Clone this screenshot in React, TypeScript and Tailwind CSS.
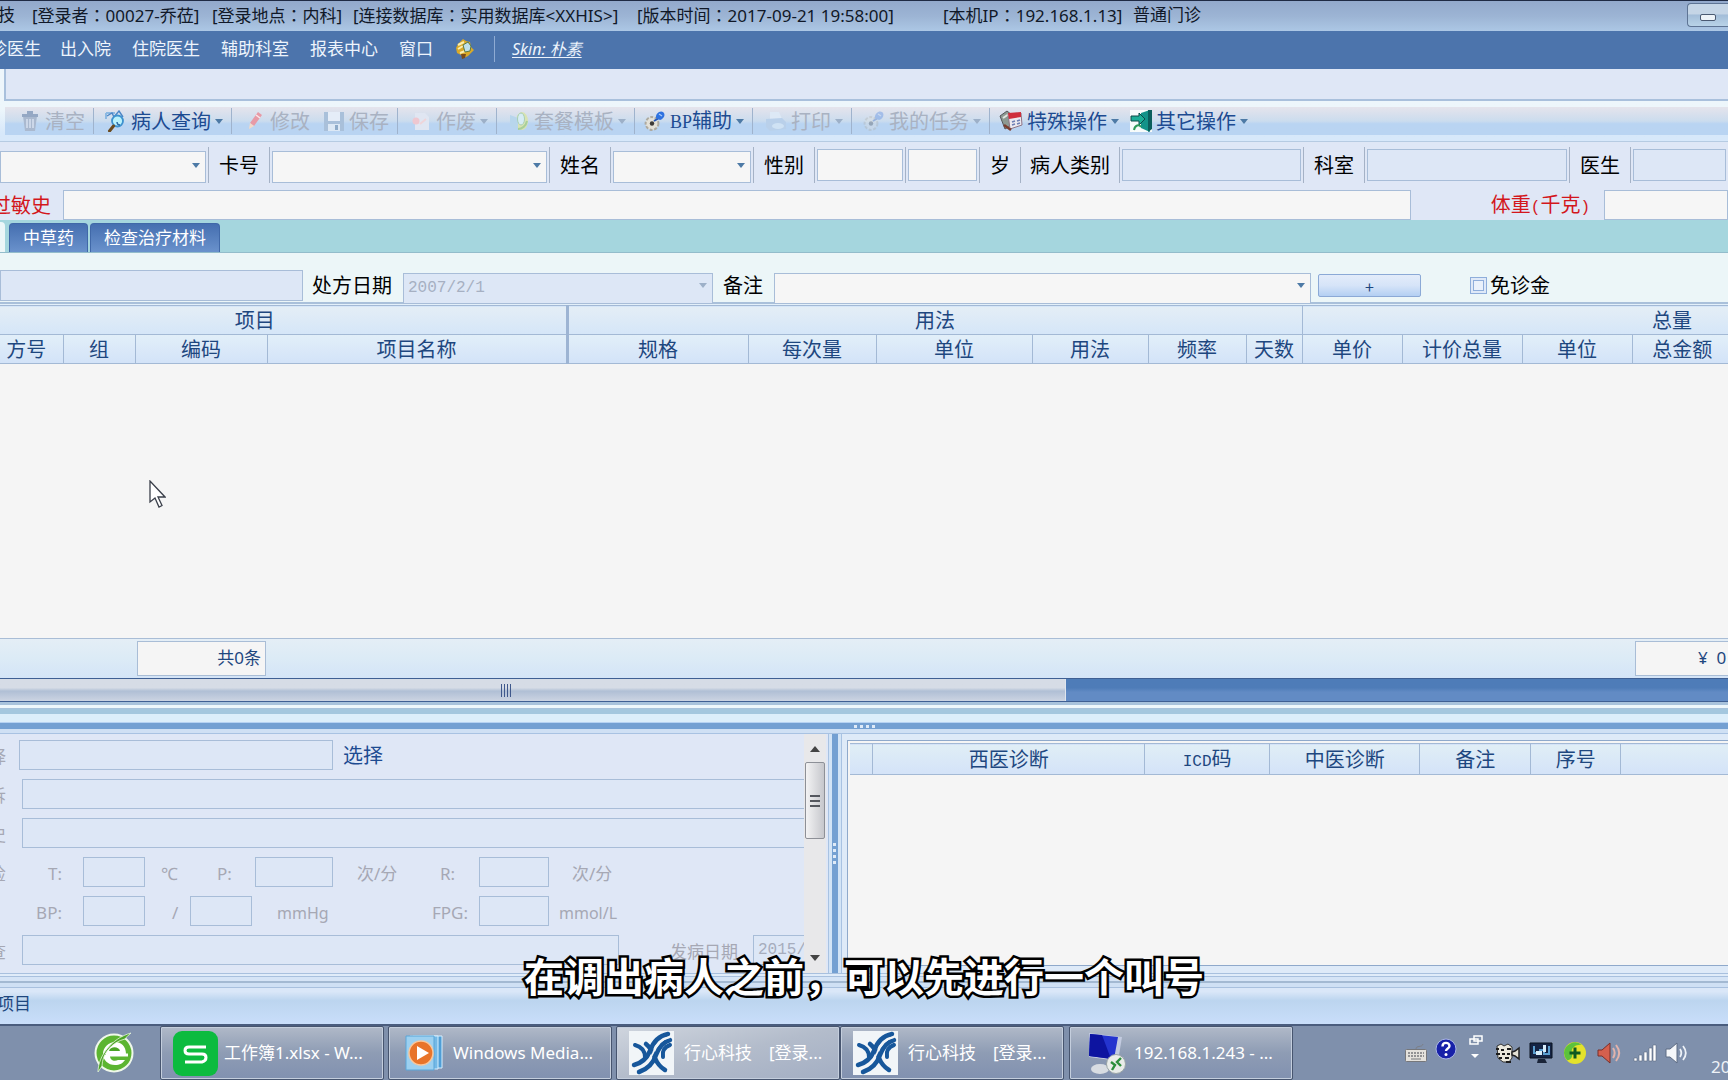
import type { ReactNode } from "react";

const UI = "font-['Noto_Sans','Noto_Sans_CJK_SC',sans-serif]";
const FORM = "font-['Noto_Sans_CJK_SC',sans-serif]";
const MONO = "font-['Liberation_Mono',monospace]";

function Caret({ muted = false }: { muted?: boolean }) {
  return (
    <svg viewBox="0 0 8 5" className={`h-[5px] w-2 shrink-0 ${muted ? "text-[#9db0c8]" : "text-[#4d7aa6]"}`} aria-hidden="true">
      <path d="M0 0h8L4 5z" fill="currentColor" />
    </svg>
  );
}

function Box({ id, label, off = false, className = "", value }: { id?: string; label?: string; off?: boolean; className?: string; value?: string }) {
  return (
    <input
      id={id}
      aria-label={label}
      disabled={off}
      defaultValue={value}
      className={`min-w-0 rounded-none border border-[#a8bdd8] pl-1 outline-none ${off ? "bg-[#dde7f6] text-[#a6adbd]" : "bg-[#f6f6f6] text-black"} ${className}`}
    />
  );
}

function Combo({ id, label, off = false, className = "", value = "" }: { id?: string; label?: string; off?: boolean; className?: string; value?: string }) {
  return (
    <div className={`relative ${className}`}>
      <select
        id={id}
        aria-label={label}
        disabled={off}
        className={`size-full appearance-none rounded-none border border-[#a8bdd8] px-1 text-base opacity-100 outline-none ${MONO} ${off ? "bg-[#dde7f6] text-[#a6b0c2]" : "bg-[#f6f6f6] text-black"}`}
      >
        <option>{value}</option>
      </select>
      <span className="pointer-events-none absolute inset-y-0 right-1.5 flex items-center">
        <Caret muted={off} />
      </span>
    </div>
  );
}

/* ---------- toolbar icons ---------- */

const TrashIcon = () => (
  <svg viewBox="0 0 22 22" className="size-[22px]">
    <path d="M4 6h14l-2 15H6z" fill="#aab9cf" />
    <path d="M3 4h16v3H3zM8 1h6v3H8z" fill="#95a8c4" />
    <path d="M8 9v9M11 9v9M14 9v9" stroke="#dbe4f2" strokeWidth="1.4" />
  </svg>
);
const FindIcon = () => (
  <svg viewBox="0 0 22 22" className="size-[22px]">
    <path d="M1 3h9M1 3v6" stroke="#8db9e2" strokeWidth="2" fill="none" />
    <path d="M2 6l5-3 2 4 5-6 4 6" stroke="#4b86c6" strokeWidth="1.4" fill="none" />
    <circle cx="12.5" cy="11" r="5.500" fill="#b9f1fb" stroke="#3d92cf" strokeWidth="1.800" />
    <path d="M12 12a3 3 0 003 3" stroke="#2c6aa8" strokeWidth="1.400" fill="none" />
    <path d="M8.500 16l-4 5" stroke="#6b4a1e" strokeWidth="3" strokeLinecap="round" />
  </svg>
);
const PenIcon = () => (
  <svg viewBox="0 0 22 22" className="size-[22px]">
    <path d="M14 2l4 3-8 11-4-3z" fill="#e79aa6" />
    <path d="M6 13l4 3-5 3z" fill="#f3d9c8" />
    <path d="M12 5l4 3" stroke="#fbe6ea" strokeWidth="1.5" />
  </svg>
);
const SaveIcon = () => (
  <svg viewBox="0 0 22 22" className="size-[22px]">
    <path d="M1 2h20v19H1z" fill="#a9c0da" />
    <path d="M5 2h12v9H5z" fill="#e5edf8" />
    <path d="M5 14h12v7H5z" fill="#dce8f5" />
    <path d="M12 15h3v5h-3z" fill="#8eabc9" />
  </svg>
);
const VoidIcon = () => (
  <svg viewBox="0 0 22 22" className="size-[22px]">
    <path d="M5 3h10l4 4v13H5z" fill="#e0e6f2" />
    <circle cx="6" cy="11" r="3.500" fill="#eec7d0" />
    <path d="M10 14l6-5" stroke="#eed5da" strokeWidth="2" />
  </svg>
);
const TemplateIcon = () => (
  <svg viewBox="0 0 22 22" className="size-[22px]">
    <ellipse cx="14" cy="11" rx="6" ry="9" fill="#d9e3b2" />
    <path d="M2 5l8 3v12l-8-4z" fill="#b8d6ec" />
    <ellipse cx="13" cy="9" rx="3.500" ry="6" fill="#d7ecf4" stroke="#a7cfb4" />
    <path d="M10 19c4 0 8-3 9-8" stroke="#a7cf9a" strokeWidth="2" fill="none" />
  </svg>
);
const GearIcon = ({ faded = false }: { faded?: boolean }) => (
  <svg viewBox="0 0 22 22" className={`size-[22px] ${faded ? "opacity-30" : ""}`}>
    <circle cx="8" cy="13.500" r="6.400" fill="#e4e1d8" stroke="#aeaaa0" strokeWidth="2" strokeDasharray="3 1.600" />
    <circle cx="8" cy="13.500" r="2.200" fill="#3d3a36" />
    <path d="M10 11l5-3" stroke="#2456b8" strokeWidth="2" />
    <path d="M12 8c-1-4 4-8 7-6s1 7-3 8z" fill="#2f72e0" />
    <path d="M15 4l3 2" stroke="#a9cdfb" strokeWidth="1.400" />
  </svg>
);
const PrintIcon = () => (
  <svg viewBox="0 0 22 22" className="size-[22px]">
    <path d="M5 2h9l3 7H5z" fill="#dde9f6" />
    <path d="M1 9l16-1 4 4v7l-16 2-4-4z" fill="#b9d0ea" />
    <ellipse cx="13" cy="16" rx="6" ry="3" fill="#cfe2f4" />
  </svg>
);
const SpecialIcon = () => (
  <svg viewBox="0 0 24 22" className="h-[22px] w-6">
    <path d="M1 6l7-5 5 4-2 11-5 3z" fill="#8d9a92" stroke="#55565a" />
    <path d="M4 8l6-4" stroke="#e2e8e2" strokeWidth="2" />
    <path d="M9 4l13-1 1 12-12 4z" fill="#eceaf0" stroke="#8e7484" />
    <path d="M9 3l13-1v5L10 9z" fill="#cf2f3c" />
    <path d="M13 12l3-1M18 11l3-1M13 15l3-1M18 14l3-1" stroke="#6d7fb4" strokeWidth="1.6" />
    <path d="M5 15l7 5" stroke="#7c3e2e" strokeWidth="2.5" />
  </svg>
);
const OtherIcon = () => (
  <svg viewBox="0 0 22 22" className="size-[22px]">
    <path d="M0 0h22v22H0z" fill="#f7fbfb" />
    <path d="M11 3l9-3v22l-9-4z" fill="#129389" />
    <path d="M18 0h4v19l-4 3z" fill="#0a5e5c" />
    <path d="M1 6h8V3l6 6-6 6v-4H1z" fill="#1cae97" stroke="#0c4a48" />
    <path d="M4 20c1-5 5-6 7-3" stroke="#2e9a5a" strokeWidth="2" fill="none" />
  </svg>
);

type Tool = { w: string; text: string; latin?: string; icon: ReactNode; off?: boolean; drop?: boolean; sep?: boolean };

const tools: Tool[] = [
  { w: "w-[89px]", text: "清空", icon: <TrashIcon />, off: true, sep: true },
  { w: "w-[138px]", text: "病人查询", icon: <FindIcon />, drop: true, sep: true },
  { w: "w-[86px]", text: "修改", icon: <PenIcon />, off: true },
  { w: "w-[80px]", text: "保存", icon: <SaveIcon />, off: true, sep: true },
  { w: "w-[99px]", text: "作废", icon: <VoidIcon />, off: true, drop: true, sep: true },
  { w: "w-[138px]", text: "套餐模板", icon: <TemplateIcon />, off: true, drop: true, sep: true },
  { w: "w-[118px]", text: "辅助", latin: "BP", icon: <GearIcon />, drop: true, sep: true },
  { w: "w-[99px]", text: "打印", icon: <PrintIcon />, off: true, drop: true, sep: true },
  { w: "w-[138px]", text: "我的任务", icon: <GearIcon faded />, off: true, drop: true, sep: true },
  { w: "w-[137px]", text: "特殊操作", icon: <SpecialIcon />, drop: true },
  { w: "w-[129px]", text: "其它操作", icon: <OtherIcon />, drop: true },
];

function Toolbar() {
  return (
    <div role="toolbar" className={`h-[41px] shrink-0 border-b border-[#b6cbe2] bg-linear-to-b from-[#edf6fb] from-20% to-[#d7e8fa] to-80% pl-[5px] pt-1.5 ${FORM}`}>
      <div className="flex h-7 items-center bg-linear-to-b from-[#e5e4ec] from-0% via-[#cbdcee] via-50% to-[#b9d4f2] to-60%">
        {tools.map((t) => (
          <button
            key={t.text}
            type="button"
            disabled={t.off}
            className={`flex h-[26px] shrink-0 items-center justify-end gap-1 whitespace-nowrap pr-2 text-xl ${t.w} ${t.sep ? "border-r border-[#9fb3cd]" : ""} ${t.off ? "text-[#a9b2c2]" : "text-[#1d4b91]"}`}
          >
            {t.icon}
            <span>
              {t.latin && <span className="font-['Liberation_Serif',serif] text-lg">{t.latin}</span>}
              {t.text}
            </span>
            {t.drop && <Caret muted={t.off} />}
          </button>
        ))}
      </div>
    </div>
  );
}

/* ---------- patient form ---------- */

type Cell = { kind: "label" | "input" | "combo" | "off"; text?: string; id?: string };
const cells: Cell[] = [
  { kind: "combo", text: "门诊号" },
  { kind: "label", text: "卡号", id: "card" },
  { kind: "combo", id: "card" },
  { kind: "label", text: "姓名", id: "name" },
  { kind: "combo", id: "name" },
  { kind: "label", text: "性别", id: "sex" },
  { kind: "input", id: "sex" },
  { kind: "input", id: "age" },
  { kind: "label", text: "岁", id: "age" },
  { kind: "label", text: "病人类别", id: "kind" },
  { kind: "off", id: "kind" },
  { kind: "label", text: "科室", id: "dept" },
  { kind: "off", id: "dept" },
  { kind: "label", text: "医生", id: "doctor" },
  { kind: "off", id: "doctor" },
];

function PatientForm() {
  return (
    <div className={`shrink-0 bg-[#dfe7f6] text-xl ${FORM}`}>
      <div className="grid h-12 grid-cols-[209fr_61px_280fr_61px_143fr_61px_91fr_74fr_41px_99px_184fr_61px_205fr_61px_97fr] items-start pt-[5px]">
        {cells.map((c, i) => (
          <div key={i} className="flex h-9 min-w-0 items-center justify-center border-r border-[#a5b2c6] last:border-r-0">
            {c.kind === "label" && <label htmlFor={c.id} className="whitespace-nowrap text-black">{c.text}</label>}
            {c.kind === "combo" && <Combo id={c.id} label={c.text} className={`mr-0.5 h-8 w-full ${i ? "ml-0.5" : ""}`} />}
            {(c.kind === "input" || c.kind === "off") && <Box id={c.id} off={c.kind === "off"} className="mx-0.5 h-8 w-full" />}
          </div>
        ))}
      </div>
      <div className="flex h-[30px] items-center text-[#d3161c]">
        <label htmlFor="allergy" className="flex w-[63px] shrink-0 justify-end overflow-hidden whitespace-nowrap pr-3 leading-7">过敏史</label>
        <Box id="allergy" className="h-[30px] flex-1" />
        <label htmlFor="weight" className="w-[193px] shrink-0 whitespace-nowrap pr-3.5 text-right leading-7">
          体重<span className={`text-base ${MONO}`}>(</span>千克<span className={`text-base ${MONO}`}>)</span>
        </label>
        <Box id="weight" className="h-[30px] w-[124px]" />
      </div>
    </div>
  );
}

/* ---------- prescription grid ---------- */

const columns: [string, string][] = [
  ["方号", "w-[63px]"],
  ["组", "w-[72px]"],
  ["编码", "w-[132px]"],
  ["项目名称", "w-[300px]"],
  ["规格", "w-[181px]"],
  ["每次量", "w-[128px]"],
  ["单位", "w-[156px]"],
  ["用法", "w-[116px]"],
  ["频率", "w-[98px]"],
  ["天数", "w-[56px]"],
  ["单价", "w-[100px]"],
  ["计价总量", "w-[120px]"],
  ["单位", "w-[110px]"],
  ["总金额", "w-[96px]"],
];

function ItemsTable() {
  return (
    <table className={`w-full table-fixed border-collapse text-xl text-[#1e477f] ${FORM}`}>
      <colgroup>
        {columns.map(([, w], i) => <col key={i} className={w} />)}
      </colgroup>
      <thead>
        <tr className="h-[29px] border-y border-[#a3b9d5] bg-linear-to-b from-[#e4eef6] to-[#d5e6f8]">
          <th colSpan={4} className="border-r-3 border-[#9db4d3] p-0 pr-14 font-normal leading-7">项目</th>
          <th colSpan={6} className="border-r border-[#a3b9d5] p-0 font-normal leading-7">用法</th>
          <th colSpan={4} className="p-0 pr-9 text-right font-normal leading-7">总量</th>
        </tr>
        <tr className="h-[29px] border-b border-[#a3b9d5] bg-linear-to-b from-[#e2eff9] to-[#d3e3f8]">
          {columns.map(([name], i) => (
            <th
              key={i}
              className={`whitespace-nowrap p-0 font-normal leading-7 ${i === 3 ? "border-r-3 border-[#9db4d3]" : i === 13 ? "pl-1" : "border-r border-[#a3b9d5]"} ${i === 0 ? "pr-2.5" : ""}`}
            >
              {name}
            </th>
          ))}
        </tr>
      </thead>
    </table>
  );
}

function Prescription() {
  return (
    <>
      <div className={`flex h-[51px] shrink-0 items-end border-b-2 border-[#a9c0da] bg-[#ecf6f8] pb-px text-xl text-black ${FORM}`}>
        <Box label="处方号" off className="mr-[9px] h-[31px] w-[303px]" />
        <label htmlFor="rxdate" className="w-[91px] shrink-0 leading-8">处方日期</label>
        <Combo id="rxdate" off value="2007/2/1" className="h-[31px] w-[310px] shrink-0" />
        <label htmlFor="note" className="w-[61px] shrink-0 pl-2.5 leading-8">备注</label>
        <Combo id="note" className="h-[31px] flex-1" />
        <button type="button" className="mb-1 ml-[7px] h-[23px] w-[103px] rounded-xs border border-[#8ba9d6] bg-linear-to-b from-[#e3ecfa] via-[#d6e4f8] to-[#b3cff3] text-base leading-4 text-[#1e477f]">+</button>
        <label className="ml-[49px] flex w-[258px] items-center gap-[3px] leading-8">
          <input type="checkbox" className="size-[17px] appearance-none border border-[#8faedb] bg-[#eaf1fb] shadow-[inset_0_0_0_2px_#dfe9f8,inset_0_0_0_3px_#8faedb]" />
          免诊金
        </label>
      </div>
      <div className="h-px shrink-0 bg-[#e3f0fa]" />
      <section className="flex min-h-[200px] flex-1 flex-col bg-[#f5f5f5]">
        <ItemsTable />
        <div className="flex-1" />
        <div className={`flex h-10 items-center border-t border-[#a9bdd6] bg-linear-to-b from-[#e4eef6] via-[#dcebf6] to-[#d4e4f7] text-[17px] text-[#1e477f] ${UI}`}>
          <div className="ml-[137px] h-[35px] w-[129px] border border-[#a9bdd6] bg-[#f5f5f5] pr-1 text-right leading-8">共0条</div>
          <div className="ml-auto h-[35px] w-[93px] overflow-hidden whitespace-pre border border-r-0 border-[#a9bdd6] bg-[#f5f5f5] pl-[62px] leading-8">¥  0</div>
        </div>
        <div className="flex h-6 border-y border-[#3f5f93] bg-linear-to-b from-[#4e7cb8] from-40% to-[#628bc4] to-60%">
          <div className="flex w-[61.7%] items-center justify-center border-r border-[#dfe5ee] bg-linear-to-b from-[#d6dce6] from-40% via-[#b0bfd5] via-55% to-[#ccd4e2]">
            <span className="mr-[54px] flex gap-0.5">
              {[0, 1, 2, 3].map((n) => <i key={n} className="h-[13px] w-px bg-[#3f588c]" />)}
            </span>
          </div>
        </div>
      </section>
    </>
  );
}

/* ---------- lower panels ---------- */

function Side({ children }: { children: string }) {
  return <span className="flex w-[6px] shrink-0 justify-end overflow-hidden">{children}</span>;
}

function ExamForm() {
  return (
    <div className="flex min-w-0 flex-[830] border-r border-[#a8c2e2] pr-0.5">
      <div className={`flex min-w-0 flex-1 flex-col gap-[9px] overflow-hidden bg-[#dfe7f6] pt-1.5 text-[17px] leading-[34px] text-[#a6a8b4] ${UI}`}>
        <div className="flex h-[30px] shrink-0">
          <Side>择</Side>
          <Box label="选择" off className="ml-[13px] h-[30px] w-[314px]" />
          <button type="button" className={`ml-2.5 text-xl leading-[30px] text-[#1d4b91] ${FORM}`}>选择</button>
        </div>
        <div className="flex h-[30px] shrink-0">
          <Side>诉</Side>
          <Box label="主诉" off className="ml-4 h-[30px] flex-1 border-r-0" />
        </div>
        <div className="flex h-[30px] shrink-0">
          <Side>史</Side>
          <Box label="病史" off className="ml-4 h-[30px] flex-1 border-r-0" />
        </div>
        <div className="grid h-[30px] shrink-0 grid-cols-[6px_56px_83px_45px_65px_78px_107px_39px_70px_70px] whitespace-nowrap">
          <Side>检</Side>
          <label htmlFor="t" className="text-right">T:</label>
          <Box id="t" off className="ml-[21px] h-[30px]" />
          <span className="pl-4">℃</span>
          <label htmlFor="p" className="pl-[27px]">P:</label>
          <Box id="p" off className="h-[30px]" />
          <span className="pl-6">次/分</span>
          <label htmlFor="r">R:</label>
          <Box id="r" off className="h-[30px]" />
          <span className="pl-[23px]">次/分</span>
        </div>
        <div className="grid h-[30px] shrink-0 grid-cols-[62px_83px_45px_62px_180px_47px_70px_80px] whitespace-nowrap">
          <label htmlFor="bp1" className="text-right">BP:</label>
          <Box id="bp1" off className="ml-[21px] h-[30px]" />
          <label htmlFor="bp2" className="pl-[27px]">/</label>
          <Box id="bp2" off className="h-[30px]" />
          <span className="pl-[25px] text-base leading-[34px]">mmHg</span>
          <label htmlFor="fpg">FPG:</label>
          <Box id="fpg" off className="h-[30px]" />
          <span className="pl-2.5 text-base leading-[34px]">mmol/L</span>
        </div>
        <div className="flex h-[30px] shrink-0">
          <Side>查</Side>
          <Box label="检查" off className="ml-4 h-[30px] w-[597px]" />
          <label htmlFor="onset" className="ml-[51px] w-[83px] shrink-0">发病日期</label>
          <Box id="onset" off value="2015/" className={`h-[30px] flex-1 border-r-0 text-base ${MONO}`} />
        </div>
      </div>
      <div className="flex w-[22px] shrink-0 flex-col items-center bg-[#e8e8ea] py-3">
        <svg viewBox="0 0 10 6" className="h-1.5 w-2.5"><path d="M5 0l5 6H0z" fill="#444" /></svg>
        <div className="mt-2.5 flex h-[77px] w-5 flex-col items-center justify-center gap-[3px] rounded-xs border border-[#8d9097] bg-linear-to-r from-[#f3f3f4] to-[#c6c7cc]">
          {[0, 1, 2].map((n) => <i key={n} className="h-0.5 w-2.5 bg-[#55585f]" />)}
        </div>
        <svg viewBox="0 0 10 6" className="mt-auto h-1.5 w-2.5"><path d="M0 0h10L5 6z" fill="#444" /></svg>
      </div>
    </div>
  );
}

const dxColumns: [string, string][] = [
  ["", "w-[23px]"],
  ["西医诊断", "w-[272px]"],
  ["ICD码", "w-[125px]"],
  ["中医诊断", "w-[150px]"],
  ["备注", "w-[111px]"],
  ["序号", "w-[90px]"],
  ["", "w-[108px]"],
];

function Diagnosis() {
  return (
    <div className="flex min-w-0 flex-[886] border-l border-[#a8c2e2] bg-[#deeaf8] pb-[7px] pl-[5px] pt-1.5">
      <div className="min-w-0 flex-1 border border-r-0 border-[#8fa9cb] bg-[#f5f5f5] pl-0.5 pt-0.5">
        <table className={`w-full table-fixed border-collapse text-xl text-[#1e477f] ${FORM}`}>
          <colgroup>{dxColumns.map(([, w], i) => <col key={i} className={w} />)}</colgroup>
          <thead>
            <tr className="h-[31px] border-y border-[#a3b9d5] bg-linear-to-b from-[#e0eef6] to-[#d4e3f8]">
              {dxColumns.map(([n], i) => (
                <th key={i} className="border-r border-[#a3b9d5] p-0 font-normal leading-7 last:border-r-0">
                  {n === "ICD码" ? <><span className={`text-base ${MONO}`}>ICD</span>码</> : n}
                </th>
              ))}
            </tr>
          </thead>
        </table>
      </div>
    </div>
  );
}

/* ---------- taskbar ---------- */

const BrandIcon = () => (
  <svg viewBox="0 0 45 44" className="h-11 w-[45px] shrink-0">
    <path d="M0 0h45v44H0z" fill="#f1f5f8" />
    <g fill="none" stroke="#17579b" strokeLinecap="round">
      <path d="M6 14c7 2 10 7 10 12" strokeWidth="4" />
      <path d="M5 34c8-2 13-7 16-14C24 11 29 5 39 3" strokeWidth="4.500" />
      <path d="M10 41c9-3 14-8 17-17 3-8 7-13 14-15" strokeWidth="4.500" />
      <path d="M17 13c5 4 7 8 9 14 2 5 5 9 10 12" strokeWidth="4.500" />
      <path d="M41 14c-6 2-8 6-7 12" strokeWidth="4" />
    </g>
    <path d="M7 38c9-3 14-8 17-16 3-9 8-14 17-16" fill="none" stroke="#f1f5f8" strokeWidth="1.800" />
  </svg>
);
const SheetIcon = () => (
  <svg viewBox="0 0 45 45" className="size-[45px] shrink-0">
    <rect width="45" height="45" rx="9" fill="#0cbb3f" />
    <path d="M33 16H16q-4 0-4 3.500t4 3.500h13q4 0 4 3.500t-4 4.500H12" fill="none" stroke="#fff" strokeWidth="3" />
  </svg>
);
const MediaIcon = () => (
  <svg viewBox="0 0 38 36" className="h-9 w-[38px] shrink-0">
    <path d="M8 1h29v32H8z" fill="#4f9ed6" stroke="#d6efff" />
    <path d="M5 1h28v33H5z" fill="#74b9e6" stroke="#d6efff" />
    <path d="M1 1h28v34H1z" fill="#9cd0f0" stroke="#5aa6d8" />
    <circle cx="16" cy="18" r="12" fill="#e8742a" stroke="#f8c79c" strokeWidth="1.5" />
    <path d="M12 11l12 7-12 7z" fill="#fff" />
  </svg>
);
const RemoteIcon = () => (
  <svg viewBox="0 0 40 44" className="h-11 w-10 shrink-0">
    <ellipse cx="14" cy="38" rx="9" ry="5" fill="#d8dce2" />
    <path d="M3 2l33 4-4 24-29-4z" fill="#c3cbe0" />
    <path d="M4 3l28 3-4 22L3 25z" fill="#2434cf" />
    <path d="M4 3l12 1 9 24L3 25z" fill="#0d14a0" />
    <circle cx="30" cy="33" r="9.500" fill="#e9ece9" stroke="#9aa4a6" />
    <path d="M25 31l4 3-3 5M35 27l-4 4 4 4" fill="none" stroke="#2d8f3c" strokeWidth="2.400" />
  </svg>
);
const BrowserIcon = () => (
  <svg viewBox="0 0 40 42" className="h-[42px] w-10 shrink-0">
    <circle cx="20" cy="21" r="18.500" fill="#5cb531" stroke="#eff8ea" strokeWidth="2" />
    <path d="M9 22h23c0-8-5-12-11-12S9 15 9 22c0 6 5 11 12 11 5 0 8-2 10-5h-7c-4 2-8 0-8-4" fill="#fff" />
    <path d="M15 19c1-5 10-5 11 0z" fill="#4ba426" />
    <path d="M4 40C4 24 18 6 37 1c-3 3-5 4-6 6C18 10 8 22 8 34z" fill="#4ba426" stroke="#e8f5e0" strokeWidth=".8" />
    <path d="M12 23h22" stroke="#fff" strokeWidth="3" />
  </svg>
);

const tasks = [
  { label: "工作簿1.xlsx - W...", icon: <SheetIcon />, cls: "mr-1 gap-1.5 pl-3", on: false },
  { label: "Windows Media...", icon: <MediaIcon />, cls: "mr-1 gap-2.5 pl-4", on: false },
  { label: "行心科技\u3000[登录...", icon: <BrandIcon />, cls: "gap-2.5 pl-3", on: true },
  { label: "行心科技\u3000[登录...", icon: <BrandIcon />, cls: "mr-[5px] gap-2.5 pl-3", on: false },
  { label: "192.168.1.243 - ...", icon: <RemoteIcon />, cls: "gap-2 pl-4", on: false },
];

function Tray() {
  return (
    <div className="ml-auto flex items-center gap-2 text-white">
      <svg viewBox="0 0 22 20" className="h-5 w-[22px]">
        <path d="M11 6c0-4 6-1 7-5" stroke="#7c7f86" fill="none" />
        <rect x=".5" y="6.500" width="21" height="12" rx="1" fill="#e4e1dc" stroke="#76777b" />
        <path d="M3 10h16M3 13h16" stroke="#77787c" strokeWidth="1.500" strokeDasharray="2 1" />
        <path d="M6 16h10" stroke="#77787c" />
      </svg>
      <svg viewBox="0 0 22 22" className="mb-2 size-[22px]">
        <circle cx="11" cy="11" r="10" fill="#1721a8" stroke="#a8b4e4" />
        <path d="M7.500 8.500c0-5 7-4.500 7-.5 0 2.500-3.500 2.500-3.500 5" fill="none" stroke="#fff" strokeWidth="2.400" />
        <circle cx="11" cy="16.500" r="1.500" fill="#fff" />
      </svg>
      <svg viewBox="0 0 14 24" className="mx-1 mb-3 h-6 w-3.5">
        <path d="M5 1h8v5H5z M1 4h8v5H1z" fill="#7f90ab" stroke="#fff" strokeWidth="1.500" />
        <path d="M2 19h8l-4 4z" fill="#fff" />
      </svg>
      <svg viewBox="0 0 26 22" className="h-[22px] w-[26px]">
        <path d="M2 4l4-2 3 2 4-2 4 3v11l-3 4H8l-5-4z" fill="#ece9dd" stroke="#333" />
        <path d="M17 10l3-1 4-3v11l-4-3-3-1z" fill="#e4e1d4" stroke="#222" strokeWidth="1.500" />
        <path d="M1 7h3M6 8h3M1 12h4M7 12h3M4 16h3M12 7h4M12 12h3M10 16h4M11 20h5" stroke="#1c1c1c" strokeWidth="2" />
      </svg>
      <svg viewBox="0 0 24 22" className="h-[22px] w-6">
        <path d="M1 1h22v15H1z" fill="#152444" stroke="#0b1220" />
        <path d="M5 4v7h6V8h4v4h5V4" stroke="#5b9fd0" strokeWidth="2" fill="none" />
        <path d="M14 3h3v7h-3zM7 9h6v4H7z" fill="#d9eefa" />
        <path d="M9 17h7l2 4H8z" fill="#1a2438" />
      </svg>
      <svg viewBox="0 0 24 24" className="mx-0.5 size-6">
        <circle cx="12" cy="12" r="11" fill="#e4e22c" />
        <path d="M1 12A11 11 0 0119 4c-6-1-12 3-10 9 1 4-3 7-5 6a11 11 0 01-3-7z" fill="#5cc23c" />
        <path d="M12 6.500v11M6.500 12h11" stroke="#0f5a20" strokeWidth="3" />
      </svg>
      <svg viewBox="0 0 24 22" className="h-[22px] w-6">
        <path d="M1 8h4l8-7v20l-8-7H1z" fill="#d4604e" stroke="#7a2f28" />
        <path d="M16 6c2 3 2 7 0 10M19 3c4 5 4 11 0 16" fill="none" stroke="#e3b3ab" strokeWidth="2" />
      </svg>
      <svg viewBox="0 0 24 18" className="ml-1 h-[18px] w-6 fill-white stroke-[#5e6c84]">
        <path d="M1 14h3v3H1zM6 11h3v6H6zM11 8h3v9h-3zM16 4h3v13h-3zM20 1h3v16h-3z" strokeWidth=".6" />
      </svg>
      <svg viewBox="0 0 24 22" className="h-[22px] w-6">
        <path d="M1 7h4l7-6v20l-7-6H1z" fill="#f5f7fa" stroke="#5e6c84" />
        <path d="M15 7c2 3 2 5 0 8M18 4c4 5 4 9 0 14" fill="none" stroke="#eef2f7" strokeWidth="1.800" />
      </svg>
      <span className="ml-3.5 mt-7 w-[17px] overflow-hidden text-[17px] leading-5 text-[#eef2f7]">20</span>
    </div>
  );
}

function Taskbar() {
  return (
    <footer className={`flex h-14 shrink-0 items-center border-t-2 border-[#4a5d7e] bg-[#7f90ac] ${UI}`}>
      <button type="button" aria-label="浏览器" className="ml-[94px] mr-[26px]"><BrowserIcon /></button>
      {tasks.map((t, i) => (
        <button
          key={i}
          type="button"
          className={`flex h-[54px] w-[224px] shrink-0 items-center overflow-hidden whitespace-nowrap rounded-xs border border-[#47556f] text-[17px] text-white shadow-[inset_0_0_0_1px_#c4cedd] ${t.cls} ${t.on ? "bg-linear-to-br from-[#cfd5de] via-[#b3bccb] to-[#a3aec3]" : "bg-linear-to-b from-[#b0b9c8] via-[#8e9cb4] to-[#8191b0]"}`}
        >
          {t.icon}
          {t.label}
        </button>
      ))}
      <Tray />
    </footer>
  );
}

/* ---------- page ---------- */

const titleParts: [string, string, string][] = [
  ["[登录者", "00027-乔莅]", "w-[180px]"],
  ["[登录地点", "内科]", "w-[141px]"],
  ["[连接数据库", "实用数据库<XXHIS>]", "w-[284px]"],
  ["[版本时间", "2017-09-21 19:58:00]", "w-[306px]"],
  ["[本机IP", "192.168.1.13]", "w-[190px]"],
];

export default function App() {
  return (
    <div className={`relative flex min-h-screen flex-col overflow-hidden bg-[#dfe7f6] ${UI}`}>
      <header className="flex h-[31px] shrink-0 whitespace-nowrap border-t border-[#1f2a44] bg-linear-to-b from-[#93a9cc] via-[#9cb4d4] to-[#acc7e5] text-[17px] leading-7 text-[#101828]">
        <span className="flex w-8 justify-end overflow-hidden pr-[17px]">技</span>
        {titleParts.map(([key, value, w]) => (
          <span key={key} className={w}>
            {key}
            <span className="font-['Noto_Sans_CJK_TC',sans-serif]" lang="zh-TW">：</span>
            {value}
          </span>
        ))}
        <span>普通门诊</span>
        <button type="button" aria-label="最小化" className="ml-auto mt-0.5 flex h-6 w-[41px] items-center rounded-l-sm border border-r-0 border-[#5e7494] bg-linear-to-b from-[#c5d5e6] from-45% via-[#a3bdd8] via-50% to-[#b9d3e8] pl-3 pt-1">
          <span className="h-[7px] w-4 rounded-xs border border-[#4b5a72] bg-[#eef3f8]" />
        </button>
      </header>

      <nav className="flex h-[38px] shrink-0 items-center gap-[21px] whitespace-nowrap bg-[#4c74ac] pb-0.5 text-[17px] text-[#eef4fc]">
        <button type="button" className="-mr-1 flex w-[43px] justify-end overflow-hidden pr-0.5">门诊医生</button>
        {["出入院", "住院医生", "辅助科室", "报表中心", "窗口"].map((m) => <button key={m} type="button">{m}</button>)}
        <button type="button" aria-label="皮肤">
          <svg viewBox="0 0 20 22" className="h-[22px] w-5">
            <path d="M7 3l2-2 3 2 4 1 1 5 3 3-3 3-3 3-4 2-3-3-4-2-1-5 2-4z" fill="#d9a928" />
            <path d="M4 7l6-3M4 11l5-3M6 15l5-2" stroke="#fbeeb0" strokeWidth="2" />
            <path d="M9 7l5-3 3 4-1 5-5 1z" fill="#bfe0ea" stroke="#5b7a46" />
            <path d="M7 16l1 5 3-1 1-4z" fill="#7a4a18" />
          </svg>
        </button>
        <span className="-ml-px -mr-1 h-[26px] w-px bg-[#8fabd3]" />
        <a href="#skin" className="text-base italic underline underline-offset-2">Skin: 朴素</a>
      </nav>

      <div className="flex h-8 shrink-0 bg-[#eef6fb]">
        <div className="ml-1 flex-1 border-b-2 border-l-2 border-[#a9c0dc] bg-[#dfe7f6]" />
      </div>

      <Toolbar />
      <PatientForm />

      <div role="tablist" className="flex h-[33px] shrink-0 items-end gap-0.5 border-b border-[#93bccb] bg-[#a5d6de] text-[17px] text-white">
        <span className="mr-0.5 h-[30px] w-[5px] rounded-tr-sm bg-[#ecf6f8]" />
        <button type="button" role="tab" className="h-[29px] w-[79px] rounded-t-sm border border-b-0 border-[#4068a8] bg-linear-to-b from-[#456fb0] to-[#6a92cc]">中草药</button>
        <button type="button" role="tab" className="h-[29px] w-[130px] rounded-t-sm border border-b-0 border-[#4068a8] bg-linear-to-b from-[#456fb0] to-[#6a92cc]">检查治疗材料</button>
      </div>

      <Prescription />

      <div className="h-[7px] shrink-0 border-b border-t-3 border-[#a9c3dc] bg-[#eef7fb]" />
      <div className="h-[5px] shrink-0 bg-[#a4c7de]" />
      <div className="h-2 shrink-0 bg-[#dceefa]" />
      <div className="flex h-[7px] shrink-0 items-center justify-center gap-[3px] border-t border-[#b7d2f2] bg-[#74a0d2]">
        {[0, 1, 2, 3].map((n) => <i key={n} className="size-[3px] bg-[#dfeaf7]" />)}
      </div>
      <div className="h-[5px] shrink-0 border-b border-[#a8c2e2] bg-[#cfe0f4]" />

      <div className="flex h-[239px] shrink-0">
        <ExamForm />
        <div className="flex w-3 shrink-0 justify-center bg-[#d3e4f6]">
          <div className="flex w-1.5 flex-col items-center justify-center gap-[3px] bg-[#74a0d2]">
            {[0, 1, 2, 3].map((n) => <i key={n} className="size-[3px] bg-[#dfeaf7]" />)}
          </div>
        </div>
        <Diagnosis />
      </div>

      <div className="h-1 shrink-0 border-y border-[#a8c0de] bg-[#e0ecf9]" />
      <div className="h-1.5 shrink-0 border-b-2 border-[#a3b9d2] bg-[#d5e4f6]" />
      <div className="h-[5px] shrink-0 border-b border-[#a8c0de] bg-[#cfe0f4]" />
      <div className="flex h-9 shrink-0 items-center bg-linear-to-b from-[#dae7f8] from-10% via-[#bcd5ef] via-35% to-[#c9defa] pb-1 text-[17px] text-[#1e477f]">
        <span className="flex w-[31px] justify-end overflow-hidden whitespace-nowrap">收费项目</span>
      </div>

      <Taskbar />

      <p className="pointer-events-none absolute inset-x-0 bottom-[75px] text-center font-['Noto_Sans_CJK_SC',sans-serif] text-[40px] leading-[60px] font-bold text-white [-webkit-text-stroke:5px_#000] [paint-order:stroke_fill]">
        在调出病人之前，可以先进行一个叫号
      </p>
      <svg viewBox="0 0 17 28" className="pointer-events-none absolute left-[149px] top-[480px] h-7 w-[17px]" aria-hidden="true">
        <path d="M1 1v21l5-4 4 9 3-1.500-4-8.500h7z" fill="#fff" stroke="#3a3f4a" strokeWidth="1.300" />
      </svg>
    </div>
  );
}
